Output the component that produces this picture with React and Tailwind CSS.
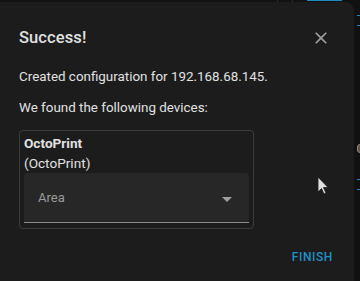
import React from 'react';

const CloseIcon = () => (
    <svg width="20" height="20" viewBox="0 0 24 24" fill="#9e9e9e">
        <path d="M19 6.41L17.59 5 12 10.59 6.41 5 5 6.41 10.59 12 5 17.59 6.41 19 12 13.41 17.59 19 19 17.59 13.41 12z" />
    </svg>
);

const Cursor = () => (
    <svg width="12" height="19" viewBox="0 0 12 19" className="absolute left-[317px] top-[176px]">
        <path d="M1 1 L1 16 L4.5 12.5 L7 18 L9 17 L6.5 11.5 L11 11.5 Z" fill="#dedede" stroke="#1a1a1a" strokeWidth="0.8" />
    </svg>
);

// what shows of the page behind the dialog, on its right edge
const PageEdge = () => (
    <div className="w-[6px] flex flex-col pt-[13px]">
        <div className="ml-[3px] h-[1px] bg-[#1e88c0]" />
        <div className="mt-[9px] ml-[3px] h-[1px] bg-[#1e88c0]" />
        <div className="mt-[118px] ml-[3px] w-[6px] h-[9px] rounded-full bg-[#6b5040] border border-[#8a8a8a]" />
        <div className="mt-[26px] ml-[3px] h-[1px] bg-[#1e88c0]" />
        <div className="mt-[9px] ml-[3px] h-[1px] bg-[#1e88c0]" />
    </div>
);

const App = () => {
    return (
        <div className="relative w-[360px] h-[281px] overflow-hidden bg-[#111111] font-['Roboto',sans-serif]">
            <div className="h-[2px] flex">
                <div className="ml-[277px] w-[1px] bg-[#2a2a2a]" />
                <div className="ml-[14px] w-[1px] bg-[#2a2a2a]" />
                <div className="ml-[14px] w-[35px] h-[1px] bg-[#1e88c0]" />
            </div>

            <div className="flex">
                <div className="w-[354px] h-[290px] bg-[#1c1c1c] rounded-tr-[9px] pl-[19px] pr-[20px] pt-[24px] text-[#e1e1e1]">
                    <div className="flex items-start justify-between">
                        <h2 className="text-[16.5px] leading-[24px] font-medium tracking-[0.1px]">Success!</h2>
                        <button className="mt-[2px] mr-[3px] w-[20px] h-[20px] flex items-center justify-center">
                            <CloseIcon />
                        </button>
                    </div>

                    <p className="mt-[17px] text-[13.4px] leading-[20px]">Created configuration for 192.168.68.145.</p>
                    <p className="mt-[11px] text-[13.4px] leading-[20px]">We found the following devices:</p>

                    <div className="mt-[12px] w-[235px] border border-[#3c3c3c] rounded-[4px] px-[4px] pt-[2px] pb-[5px]">
                        <div className="text-[13.6px] leading-[20px] font-bold">OctoPrint</div>
                        <div className="text-[13.6px] leading-[20px]">(OctoPrint)</div>
                        <div className="h-[50px] bg-[#272727] rounded-t-[4px] border-b border-[#8c8c8c] flex items-center justify-between pl-[14px] pr-[17px]">
                            <span className="text-[13px] text-[#9a9a9a]">Area</span>
                            <svg width="10" height="5" viewBox="0 0 10 5" className="mt-[3px]">
                                <path d="M0 0 L10 0 L5 5 Z" fill="#9e9e9e" />
                            </svg>
                        </div>
                    </div>

                    <div className="flex justify-end mt-[18px] pr-[1px]">
                        <button className="text-[12px] leading-[20px] font-medium tracking-[0.6px] text-[#1e90c8]">FINISH</button>
                    </div>
                </div>
                <PageEdge />
            </div>

            <Cursor />
        </div>
    );
};

export default App;
